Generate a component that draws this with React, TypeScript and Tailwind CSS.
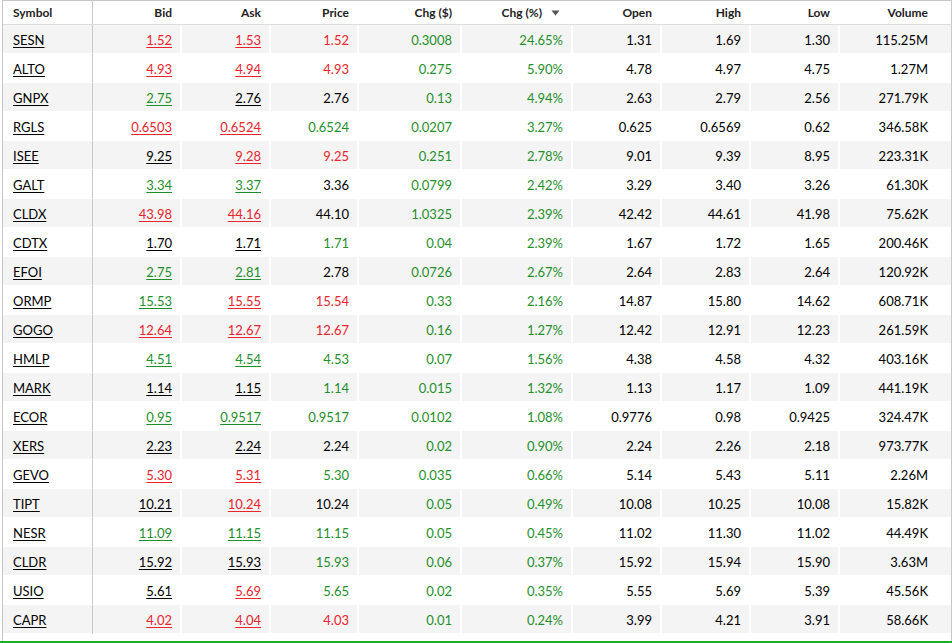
import * as React from 'react'

type C = 'r' | 'g' | 'k'

type Row = {
  sym: string
  bid: [string, C]
  ask: [string, C]
  price: [string, C]
  chg: string
  pct: string
  open: string
  high: string
  low: string
  vol: string
}

const ROWS: Row[] = [
  { sym: 'SESN', bid: ['1.52', 'r'], ask: ['1.53', 'r'], price: ['1.52', 'r'], chg: '0.3008', pct: '24.65%', open: '1.31', high: '1.69', low: '1.30', vol: '115.25M' },
  { sym: 'ALTO', bid: ['4.93', 'r'], ask: ['4.94', 'r'], price: ['4.93', 'r'], chg: '0.275', pct: '5.90%', open: '4.78', high: '4.97', low: '4.75', vol: '1.27M' },
  { sym: 'GNPX', bid: ['2.75', 'g'], ask: ['2.76', 'k'], price: ['2.76', 'k'], chg: '0.13', pct: '4.94%', open: '2.63', high: '2.79', low: '2.56', vol: '271.79K' },
  { sym: 'RGLS', bid: ['0.6503', 'r'], ask: ['0.6524', 'r'], price: ['0.6524', 'g'], chg: '0.0207', pct: '3.27%', open: '0.625', high: '0.6569', low: '0.62', vol: '346.58K' },
  { sym: 'ISEE', bid: ['9.25', 'k'], ask: ['9.28', 'r'], price: ['9.25', 'r'], chg: '0.251', pct: '2.78%', open: '9.01', high: '9.39', low: '8.95', vol: '223.31K' },
  { sym: 'GALT', bid: ['3.34', 'g'], ask: ['3.37', 'g'], price: ['3.36', 'k'], chg: '0.0799', pct: '2.42%', open: '3.29', high: '3.40', low: '3.26', vol: '61.30K' },
  { sym: 'CLDX', bid: ['43.98', 'r'], ask: ['44.16', 'r'], price: ['44.10', 'k'], chg: '1.0325', pct: '2.39%', open: '42.42', high: '44.61', low: '41.98', vol: '75.62K' },
  { sym: 'CDTX', bid: ['1.70', 'k'], ask: ['1.71', 'k'], price: ['1.71', 'g'], chg: '0.04', pct: '2.39%', open: '1.67', high: '1.72', low: '1.65', vol: '200.46K' },
  { sym: 'EFOI', bid: ['2.75', 'g'], ask: ['2.81', 'g'], price: ['2.78', 'k'], chg: '0.0726', pct: '2.67%', open: '2.64', high: '2.83', low: '2.64', vol: '120.92K' },
  { sym: 'ORMP', bid: ['15.53', 'g'], ask: ['15.55', 'r'], price: ['15.54', 'r'], chg: '0.33', pct: '2.16%', open: '14.87', high: '15.80', low: '14.62', vol: '608.71K' },
  { sym: 'GOGO', bid: ['12.64', 'r'], ask: ['12.67', 'r'], price: ['12.67', 'r'], chg: '0.16', pct: '1.27%', open: '12.42', high: '12.91', low: '12.23', vol: '261.59K' },
  { sym: 'HMLP', bid: ['4.51', 'g'], ask: ['4.54', 'g'], price: ['4.53', 'g'], chg: '0.07', pct: '1.56%', open: '4.38', high: '4.58', low: '4.32', vol: '403.16K' },
  { sym: 'MARK', bid: ['1.14', 'k'], ask: ['1.15', 'k'], price: ['1.14', 'g'], chg: '0.015', pct: '1.32%', open: '1.13', high: '1.17', low: '1.09', vol: '441.19K' },
  { sym: 'ECOR', bid: ['0.95', 'g'], ask: ['0.9517', 'g'], price: ['0.9517', 'g'], chg: '0.0102', pct: '1.08%', open: '0.9776', high: '0.98', low: '0.9425', vol: '324.47K' },
  { sym: 'XERS', bid: ['2.23', 'k'], ask: ['2.24', 'k'], price: ['2.24', 'k'], chg: '0.02', pct: '0.90%', open: '2.24', high: '2.26', low: '2.18', vol: '973.77K' },
  { sym: 'GEVO', bid: ['5.30', 'r'], ask: ['5.31', 'r'], price: ['5.30', 'g'], chg: '0.035', pct: '0.66%', open: '5.14', high: '5.43', low: '5.11', vol: '2.26M' },
  { sym: 'TIPT', bid: ['10.21', 'k'], ask: ['10.24', 'r'], price: ['10.24', 'k'], chg: '0.05', pct: '0.49%', open: '10.08', high: '10.25', low: '10.08', vol: '15.82K' },
  { sym: 'NESR', bid: ['11.09', 'g'], ask: ['11.15', 'g'], price: ['11.15', 'g'], chg: '0.05', pct: '0.45%', open: '11.02', high: '11.30', low: '11.02', vol: '44.49K' },
  { sym: 'CLDR', bid: ['15.92', 'k'], ask: ['15.93', 'k'], price: ['15.93', 'g'], chg: '0.06', pct: '0.37%', open: '15.92', high: '15.94', low: '15.90', vol: '3.63M' },
  { sym: 'USIO', bid: ['5.61', 'k'], ask: ['5.69', 'r'], price: ['5.65', 'g'], chg: '0.02', pct: '0.35%', open: '5.55', high: '5.69', low: '5.39', vol: '45.56K' },
  { sym: 'CAPR', bid: ['4.02', 'r'], ask: ['4.04', 'r'], price: ['4.03', 'r'], chg: '0.01', pct: '0.24%', open: '3.99', high: '4.21', low: '3.91', vol: '58.66K' },
]

const COLOR: Record<C, string> = {
  r: 'text-[#e8242c]',
  g: 'text-[#1f8f2b]',
  k: 'text-black',
}

// column track: symbol | bid | ask | price | chg$ | chg% | open | high | low | volume
const GRID = 'grid grid-cols-[90px_89px_89px_88px_103px_111px_89px_89px_89px_111px]'

const cell = 'flex items-center justify-end pr-2 border-r-2 border-white'

function SortArrow() {
  return (
    <svg width="9" height="6" viewBox="0 0 9 6" className="ml-[9px]">
      <path d="M0.5 0.5 L8.5 0.5 L4.5 5.5 Z" fill="#555" />
    </svg>
  )
}

export default function App() {
  return (
    <div className="w-[952px] bg-white font-['Lato','Open_Sans',sans-serif] text-[13px] text-black">
      <div className="ml-[2px] w-[950px] border-x border-t border-[#c8c8c8] pb-[7px]">
        {/* header */}
        <div className={`${GRID} h-[24px] border-b border-[#dcdcdc] text-[12px] font-bold text-[#222]`}>
          <div className="flex items-center pl-[10px] border-r border-[#c8c8c8]">Symbol</div>
          <div className={cell}>Bid</div>
          <div className={cell}>Ask</div>
          <div className={cell}>Price</div>
          <div className={cell}>Chg ($)</div>
          <div className={`${cell} pr-[11px]`}>
            Chg (%)
            <SortArrow />
          </div>
          <div className={cell}>Open</div>
          <div className={cell}>High</div>
          <div className={cell}>Low</div>
          <div className="flex items-center justify-end pr-[23px]">Volume</div>
        </div>

        {ROWS.map((r, i) => {
          const bg = i % 2 === 0 ? 'bg-[#f4f4f4]' : 'bg-white'
          const c = `${cell} ${bg} border-b pt-[4px]`
          return (
            <div key={r.sym} className={`${GRID} h-[29px]`}>
              <div className={`flex items-center pl-[10px] pt-[4px] border-r border-[#c8c8c8] border-b border-b-white ${bg}`}>
                <span className="underline underline-offset-2">{r.sym}</span>
              </div>
              <div className={c}>
                <span className={`underline underline-offset-2 ${COLOR[r.bid[1]]}`}>{r.bid[0]}</span>
              </div>
              <div className={c}>
                <span className={`underline underline-offset-2 ${COLOR[r.ask[1]]}`}>{r.ask[0]}</span>
              </div>
              <div className={c}>
                <span className={COLOR[r.price[1]]}>{r.price[0]}</span>
              </div>
              <div className={c}>
                <span className={COLOR.g}>{r.chg}</span>
              </div>
              <div className={c}>
                <span className={COLOR.g}>{r.pct}</span>
              </div>
              <div className={c}>{r.open}</div>
              <div className={c}>{r.high}</div>
              <div className={c}>{r.low}</div>
              <div className={`flex items-center justify-end pr-[23px] pt-[4px] border-b border-white ${bg}`}>{r.vol}</div>
            </div>
          )
        })}
      </div>
      <div className="h-[2px] bg-[#1cae2a]" />
    </div>
  )
}
